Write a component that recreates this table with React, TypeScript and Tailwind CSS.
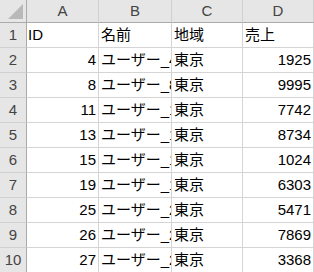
import React from "react";

const rows: [number, string, string, number][] = [
  [4, "ユーザー_4", "東京", 1925],
  [8, "ユーザー_8", "東京", 9995],
  [11, "ユーザー_11", "東京", 7742],
  [13, "ユーザー_13", "東京", 8734],
  [15, "ユーザー_15", "東京", 1024],
  [19, "ユーザー_19", "東京", 6303],
  [25, "ユーザー_25", "東京", 5471],
  [26, "ユーザー_26", "東京", 7869],
  [27, "ユーザー_27", "東京", 3368],
];

const font = "font-['Liberation_Sans','Noto_Sans_CJK_JP',sans-serif]";
const colHead =
  "h-[23px] bg-[#e6e6e6] border-r border-r-[#d0d0d0] border-b border-b-[#ababab] flex items-center justify-center text-[15px] text-[#444]";
const rowHead =
  "h-[25px] bg-[#e6e6e6] border-r border-r-[#ababab] border-b border-b-[#d0d0d0] flex items-center justify-center text-[15px] text-[#444]";
const cell =
  "h-[25px] border-r border-b border-[#d4d4d4] flex items-center overflow-hidden whitespace-nowrap text-[15px] text-black";

const App: React.FC = () => {
  return (
    <div className={`w-[314px] h-[272px] overflow-hidden bg-white ${font}`}>
      <div className="grid grid-cols-[27px_72px_73px_71px_71px]">
        <div className="h-[23px] bg-[#e6e6e6] border-r border-r-[#ababab] border-b border-b-[#ababab] relative">
          <svg className="absolute left-0 top-0" width="26" height="22" viewBox="0 0 26 22">
            <polygon points="23,4 23,19 8,19" fill="#b9b9b9" />
          </svg>
        </div>
        {["A", "B", "C", "D"].map((c) => (
          <div key={c} className={colHead}>
            {c}
          </div>
        ))}

        <div className={rowHead}>1</div>
        <div className={`${cell} pl-[1px]`}>ID</div>
        <div className={`${cell} pl-[2px]`}>名前</div>
        <div className={`${cell} pl-[2px]`}>地域</div>
        <div className={`${cell} pl-[2px]`}>売上</div>

        {rows.map(([id, name, area, sales], i) => (
          <React.Fragment key={id}>
            <div className={rowHead}>{i + 2}</div>
            <div className={`${cell} justify-end pr-[2px]`}>{id}</div>
            <div className={`${cell} pl-[2px]`}>{name}</div>
            <div className={`${cell} pl-[2px]`}>{area}</div>
            <div className={`${cell} justify-end pr-[2px]`}>{sales}</div>
          </React.Fragment>
        ))}
      </div>
    </div>
  );
};

export default App;
